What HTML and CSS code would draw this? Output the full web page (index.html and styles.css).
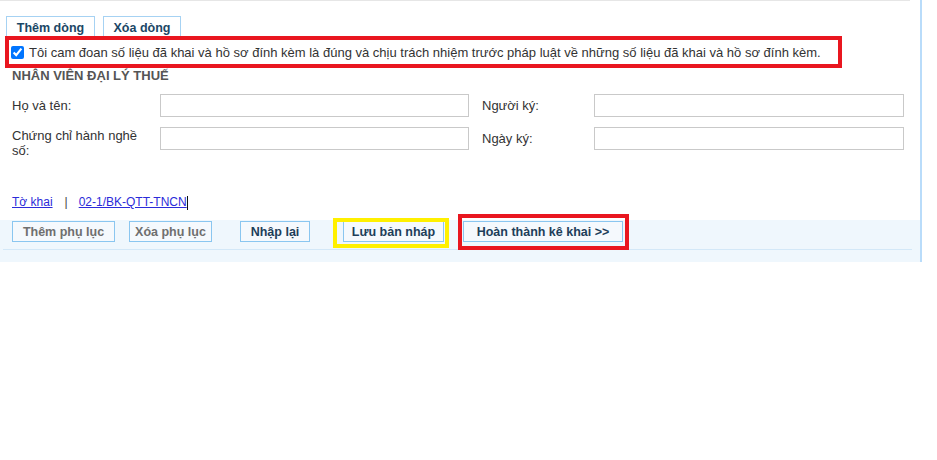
FILE: index.html
```html
<!DOCTYPE html>
<html lang="vi">
<head>
<meta charset="utf-8">
<title>Tờ khai</title>
<link rel="stylesheet" href="styles.css">
</head>
<body>
<div class="page">
  <div class="topline"></div>
  <div class="tabs">
    <span class="tab tab-add">Thêm dòng</span>
    <span class="tab tab-del">Xóa dòng</span>
  </div>
  <label class="commit"><input type="checkbox" class="commit-check" checked><span>Tôi cam đoan số liệu đã khai và hồ sơ đính kèm là đúng và chịu trách nhiệm trước pháp luật về những số liệu đã khai và hồ sơ đính kèm.</span></label>
  <h3 class="section">NHÂN VIÊN ĐẠI LÝ THUẾ</h3>
  <div class="form">
    <div class="label">Họ và tên:</div>
    <input class="field" type="text">
    <div class="label label-right">Người ký:</div>
    <input class="field field-right" type="text">
    <div class="label">Chứng chỉ hành nghề số:</div>
    <input class="field" type="text">
    <div class="label label-right">Ngày ký:</div>
    <input class="field field-right" type="text">
  </div>
  <div class="links">
    <a href="#" class="link">Tờ khai</a>
    <span class="sep">|</span>
    <a href="#" class="link">02-1/BK-QTT-TNCN</a><span class="caret"></span>
  </div>
  <div class="actions">
    <div class="btn-row">
      <button class="btn btn-disabled btn-addapp">Thêm phụ lục</button>
      <button class="btn btn-disabled btn-delapp">Xóa phụ lục</button>
      <button class="btn btn-reset">Nhập lại</button>
      <span class="mark mark-yellow"><button class="btn btn-draft">Lưu bản nháp</button></span>
      <span class="mark mark-red"><button class="btn btn-finish">Hoàn thành kê khai &gt;&gt;</button></span>
    </div>
    <div class="divider"></div>
  </div>
</div>
</body>
</html>
```
FILE: styles.css
```css
* { box-sizing: border-box; }
html, body { margin: 0; padding: 0; background: #fff; }
body {
  font-family: "Liberation Sans", Arial, sans-serif;
  font-size: 13px;
  color: #333;
}
.page {
  width: 922px;
  border-right: 2px solid #b9dcfa;
  padding-bottom: 0;
}
.topline {
  width: 910px;
  height: 1px;
  background: #e6e6e6;
}
.tabs {
  display: flex;
  gap: 8px;
  margin: 15px 0 0 6px;
  height: 20px;
}
.tab {
  display: flex;
  align-items: center;
  justify-content: center;
  height: 20px;
  border: 1px solid #a6d2f3;
  border-bottom: none;
  font-weight: bold;
  font-size: 12.5px;
  color: #1b4766;
  padding-top: 2px;
}
.tab-add { width: 89px; }
.tab-del { width: 78px; }
.commit {
  display: flex;
  align-items: center;
  width: 837px;
  height: 32px;
  margin-left: 5px;
  border: 4px solid #e9161f;
  font-size: 13px;
  color: #333;
  white-space: nowrap;
}
.commit-check {
  width: 13px;
  height: 13px;
  margin: 0 5px 0 2px;
}
.section {
  margin: 0;
  padding-left: 12px;
  font-size: 13px;
  line-height: 16px;
  font-weight: bold;
  color: #555;
}
.form {
  display: grid;
  grid-template-columns: 148px 309px 125px 310px;
  row-gap: 10px;
  margin: 10px 0 0 12px;
  align-items: start;
}
.label {
  min-height: 23px;
  display: flex;
  align-items: center;
  padding-right: 12px;
  line-height: 15px;
  color: #333;
}
.form .label:nth-child(5) { padding-top: 1px; }
.label-right { padding-left: 13px; }
.field {
  height: 23px;
  border: 1px solid #c9c9c9;
  background: #fff;
  margin: 0;
  padding: 0 4px;
  font: inherit;
}
.links {
  margin: 37px 0 0 12px;
  font-size: 12px;
  line-height: 15px;
  display: flex;
  align-items: center;
}
.link { color: #2b2bd9; text-decoration: underline; }
.sep { margin: 0 11px 0 12px; color: #444; }
.caret {
  display: inline-block;
  width: 1px;
  height: 14px;
  background: #111;
}
.actions {
  margin-top: 10px;
  background: #eff7fd;
  height: 42px;
  padding-top: 0;
}
.btn-row {
  display: flex;
  align-items: flex-start;
  padding-left: 12px;
  height: 29px;
}
.btn {
  height: 21px;
  border: 1px solid #8ac6f0;
  background: #f5f9fd;
  font-family: "Liberation Sans", Arial, sans-serif;
  font-weight: bold;
  font-size: 12.5px;
  color: #1d3e5a;
  padding: 0;
  margin: 1px 0 0 0;
}
.btn-disabled { color: #6f6f6f; }
.btn-addapp { width: 103px; }
.btn-delapp { width: 83px; margin-left: 14px; }
.btn-reset { width: 70px; margin-left: 28px; }
.btn-draft { width: 101px; margin: 0; display: block; }
.btn-finish { width: 160px; margin: 0; display: block; }
.mark { position: relative; display: block; margin-top: 1px; }
.mark::after {
  content: "";
  position: absolute;
  pointer-events: none;
}
.mark-yellow { margin-left: 33px; }
.mark-yellow::after {
  top: -3px; left: -10px; right: -5px; bottom: -6px;
  border: 4px solid #fff000;
}
.mark-red { margin-left: 19px; }
.mark-red::after {
  top: -7px; left: -5px; right: -6px; bottom: -8px;
  border: 4px solid #e9161f;
}
.divider {
  height: 1px;
  margin: 0 8px 0 3px;
  background: #d3e8f8;
}
```
